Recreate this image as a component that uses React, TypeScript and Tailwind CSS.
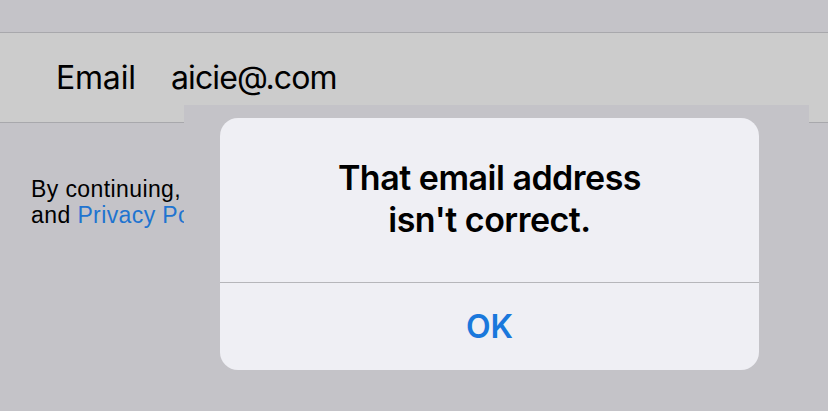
import React from "react";

export default function App() {
	return (
		<div className="relative w-[828px] h-[411px] overflow-hidden bg-[#c4c3c8] font-['Inter',sans-serif]">
			<div className="h-[32px]" />
			<div className="h-[91px] bg-[#cccccc] border-y border-[#a8a8ac] flex items-center pl-[56px] text-[32px] text-black">
				<span className="w-[115px] tracking-[-0.2px]">Email</span>
				<span className="tracking-[-0.9px]">aicie@.com</span>
			</div>

			{/* text runs on under the cover, so clip it where the cover starts */}
			<div className="mt-[53px] ml-[31px] w-[153px] overflow-hidden whitespace-nowrap font-['Liberation_Sans',Arial,sans-serif] text-[23px] leading-[26px] tracking-[0.4px] text-black">
				<p>By continuing, you agree to our Terms of Service</p>
				<p>
					and <span className="text-[#1f74d0]">Privacy Policy</span>.
				</p>
			</div>

			<div className="absolute left-[184px] top-[105px] w-[625px] bottom-0 bg-[#c4c3c8]" />

			<div className="absolute left-[220px] top-[118px] w-[539px] rounded-[18px] bg-[#efeff4] flex flex-col">
				<div className="h-[164px] pt-[39px] text-center text-[34px] leading-[42px] font-semibold text-black tracking-[-0.5px]">
					<p>That email address</p>
					<p>isn't correct.</p>
				</div>
				<div className="h-px bg-[#b6b6ba]" />
				<button className="h-[87px] flex items-center justify-center text-[32px] font-semibold text-[#1a78dc]">
					OK
				</button>
			</div>
		</div>
	);
}
